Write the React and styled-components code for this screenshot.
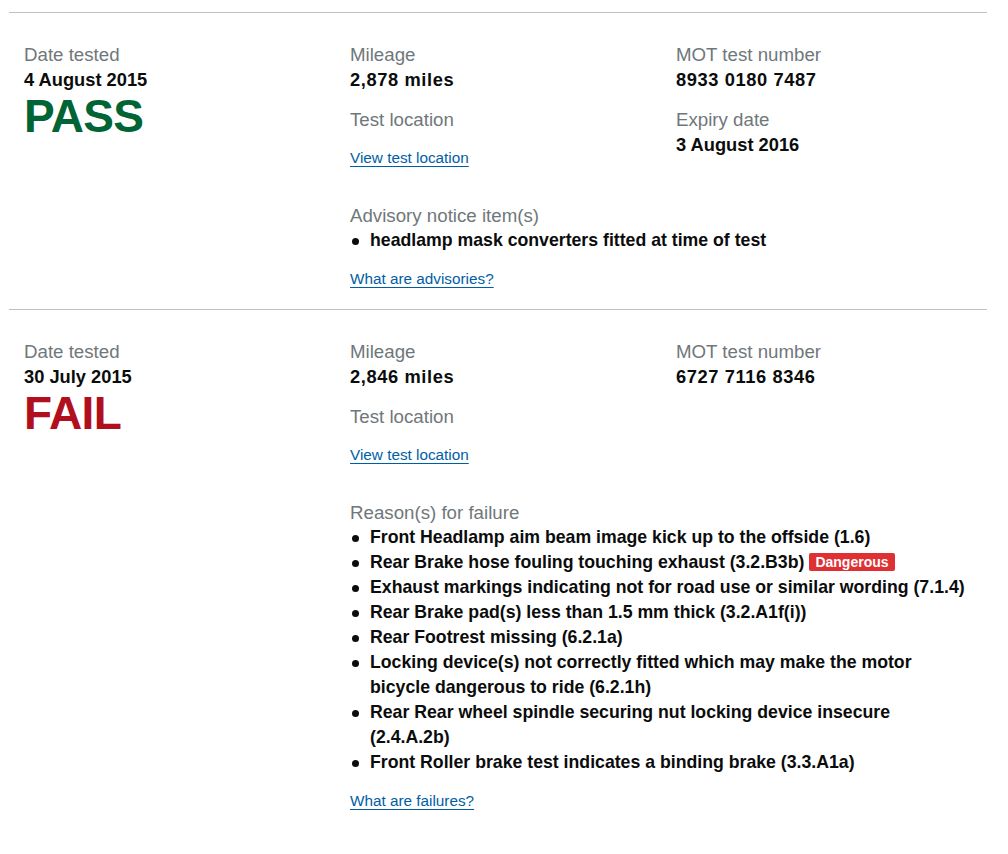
import React from 'react'
import styled, { createGlobalStyle } from 'styled-components';

const GlobalStyle = createGlobalStyle`
    body{
        margin: 0;
        background: #fff;
        font-family: "Liberation Sans", Arial, sans-serif;
        color: #0b0c0c;
    }
`;

const tests = [
    {
        date: '4 August 2015',
        result: 'PASS',
        mileage: '2,878 miles',
        number: '8933 0180 7487',
        expiry: '3 August 2016',
        listTitle: 'Advisory notice item(s)',
        items: [{ text: 'headlamp mask converters fitted at time of test' }],
        help: 'What are advisories?',
    },
    {
        date: '30 July 2015',
        result: 'FAIL',
        mileage: '2,846 miles',
        number: '6727 7116 8346',
        listTitle: 'Reason(s) for failure',
        items: [
            { text: 'Front Headlamp aim beam image kick up to the offside (1.6)' },
            { text: 'Rear Brake hose fouling touching exhaust (3.2.B3b)', tag: 'Dangerous' },
            { text: 'Exhaust markings indicating not for road use or similar wording (7.1.4)' },
            { text: 'Rear Brake pad(s) less than 1.5 mm thick (3.2.A1f(i))' },
            { text: 'Rear Footrest missing (6.2.1a)' },
            { text: 'Locking device(s) not correctly fitted which may make the motor bicycle dangerous to ride (6.2.1h)' },
            { text: 'Rear Rear wheel spindle securing nut locking device insecure (2.4.A.2b)' },
            { text: 'Front Roller brake test indicates a binding brake (3.3.A1a)' },
        ],
        help: 'What are failures?',
    },
];

function TestRecord({ test }) {
    return (
        <Record>
            <Column>
                <Label>Date tested</Label>
                <Value>{test.date}</Value>
                <Result $pass={test.result === 'PASS'}>{test.result}</Result>
            </Column>
            <Column>
                <Label>Mileage</Label>
                <Value $digits>{test.mileage}</Value>
                <Label $spaced>Test location</Label>
                <Link href="#">View test location</Link>
            </Column>
            <Column>
                <Label>MOT test number</Label>
                <Value $digits>{test.number}</Value>
                {test.expiry && (
                    <>
                        <Label $spaced>Expiry date</Label>
                        <Value>{test.expiry}</Value>
                    </>
                )}
            </Column>
            <Details>
                <Label>{test.listTitle}</Label>
                <List>
                    {test.items.map((item, i) => (
                        <li key={i}>
                            {item.text}
                            {item.tag && <Tag>{item.tag}</Tag>}
                        </li>
                    ))}
                </List>
                <Link href="#">{test.help}</Link>
            </Details>
        </Record>
    )
}

function App() {
    return (
        <>
            <GlobalStyle />
            <Page>
                {tests.map((t, i) => <TestRecord key={i} test={t} />)}
            </Page>
        </>
    )
}

const Page = styled.main`
    padding: 12px 21px 0 9px;
`;

const Record = styled.section`
    display: grid;
    grid-template-columns: repeat(3, 1fr);
    border-top: 1px solid #bfc1c3;
    padding: 29px 0 18px;
`;

const Column = styled.div`
    padding-left: 15px;
    display: flex;
    flex-direction: column;
    align-items: flex-start;
`;

const Details = styled(Column)`
    grid-column: 2 / 4;
    margin-top: 33px;
    padding-right: 17px;
`;

const Label = styled.div`
    font-size: 18.7px;
    line-height: 25px;
    color: #6f777b;
    margin-top: ${p => p.$spaced ? '15px' : '0'};
`;

const Value = styled.div`
    font-size: 18.3px;
    line-height: 25px;
    font-weight: 700;
    letter-spacing: ${p => p.$digits ? '0.6px' : '0'};
`;

const Result = styled.div`
    font-size: 46px;
    line-height: 48px;
    font-weight: 700;
    letter-spacing: -0.6px;
    color: ${p => p.$pass ? '#006435' : '#b10e1e'};
`;

const Link = styled.a`
    font-size: 15.3px;
    line-height: 25px;
    margin-top: 13px;
    color: #005ea5;
    text-decoration: underline;
    text-underline-offset: 3px;
`;

const List = styled.ul`
    margin: 0;
    padding: 0 0 0 20px;
    list-style: none;
    li{
        position: relative;
        font-size: 17.7px;
        line-height: 25px;
        font-weight: 700;
        &::before{
            content: '';
            position: absolute;
            left: -18px;
            top: 10px;
            width: 7px;
            height: 7px;
            border-radius: 50%;
            background: #0b0c0c;
        }
    }
`;

const Tag = styled.span`
    display: inline-block;
    margin-left: 5px;
    padding: 0 6px;
    background: #df3034;
    color: #fff;
    font-size: 14px;
    line-height: 18px;
    font-weight: 700;
    border-radius: 2px;
    vertical-align: 1px;
`;

export default App;
